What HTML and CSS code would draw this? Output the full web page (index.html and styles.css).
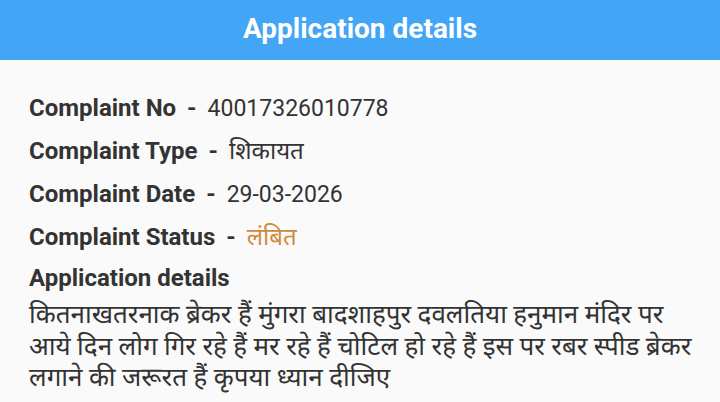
FILE: index.html
```html
<!DOCTYPE html>
<html>
<head>
<meta charset="utf-8">
<link rel="stylesheet" href="styles.css">
</head>
<body>
<header class="bar"><h1 class="title">Application details</h1></header>
<main class="content">
  <div class="row"><span class="label">Complaint No</span><span class="dash">-</span><span class="value">40017326010778</span></div>
  <div class="row"><span class="label">Complaint Type</span><span class="dash">-</span><span class="value hi">शिकायत</span></div>
  <div class="row"><span class="label">Complaint Date</span><span class="dash">-</span><span class="value">29-03-2026</span></div>
  <div class="row"><span class="label">Complaint Status</span><span class="dash">-</span><span class="value hi status">लंबित</span></div>
  <div class="section-label">Application details</div>
  <p class="desc">कितनाखतरनाक ब्रेकर हैं मुंगरा बादशाहपुर दवलतिया हनुमान मंदिर पर आये दिन लोग गिर रहे हैं मर रहे हैं चोटिल हो रहे हैं इस पर रबर स्पीड ब्रेकर लगाने की जरूरत हैं कृपया ध्यान दीजिए</p>
</main>
</body>
</html>
```
FILE: styles.css
```css
html, body { margin: 0; padding: 0; }
body {
  width: 720px; height: 402px; overflow: hidden;
  background: #fafafa;
  font-family: Roboto, "Noto Sans Devanagari", "Noto Sans", sans-serif;
  color: #333;
}
.bar {
  height: 60px; box-sizing: border-box; padding-bottom: 3px;
  background: #42a5f5;
  display: flex; align-items: center; justify-content: center;
}
.title {
  margin: 0; color: #fff; font-size: 28px; font-weight: 700; line-height: 32px;
}
.content { padding: 27px 12px 0 29px; }
.row {
  display: flex; align-items: baseline; height: 43px; line-height: 43px;
}
.label { font-size: 24px; font-weight: 700; color: #333; }
.dash { font-size: 24px; font-weight: 700; margin: 0 11px 0 11px; }
.value { font-size: 23px; color: #333; }
.hi { font-size: 24px; }
.status { color: #d08a3c; }
.section-label { font-size: 24px; font-weight: 700; line-height: 33px; padding-top: 3px; }
.desc { margin: 4px 0 0; font-size: 26px; line-height: 31.5px; }
```
